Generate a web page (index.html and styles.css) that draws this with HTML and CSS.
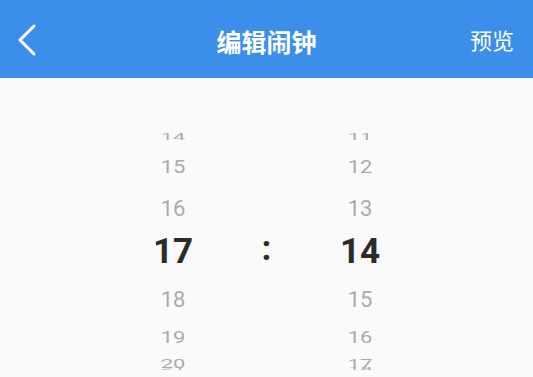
FILE: index.html
```html
<!DOCTYPE html>
<html lang="zh">
<head>
<meta charset="utf-8">
<title>编辑闹钟</title>
<link rel="stylesheet" href="styles.css">
</head>
<body>
<header class="bar">
  <div class="bar-side bar-left">
    <svg class="back" width="24" height="34" viewBox="0 0 24 34" aria-hidden="true">
      <path d="M17 3 L3 17 L17 31" fill="none" stroke="#fff" stroke-width="3" stroke-linecap="round" stroke-linejoin="round"/>
    </svg>
  </div>
  <h1 class="title">编辑闹钟</h1>
  <div class="bar-side bar-right"><span class="preview">预览</span></div>
</header>
<main class="picker">
  <div class="wheel">
    <div class="row r1"><span>14</span></div>
    <div class="row r2"><span>15</span></div>
    <div class="row r3"><span>16</span></div>
    <div class="row r4 sel"><span>17</span></div>
    <div class="row r5"><span>18</span></div>
    <div class="row r6"><span>19</span></div>
    <div class="row r7"><span>20</span></div>
    <div class="row r8"><span>21</span></div>
  </div>
  <div class="sep"><span>:</span></div>
  <div class="wheel">
    <div class="row r1"><span>11</span></div>
    <div class="row r2"><span>12</span></div>
    <div class="row r3"><span>13</span></div>
    <div class="row r4 sel"><span>14</span></div>
    <div class="row r5"><span>15</span></div>
    <div class="row r6"><span>16</span></div>
    <div class="row r7"><span>17</span></div>
    <div class="row r8"><span>18</span></div>
  </div>
</main>
</body>
</html>
```

FILE: styles.css
```css
html, body {
  margin: 0;
  padding: 0;
  background: #fafafa;
  font-family: Roboto, "Noto Sans", "Noto Sans CJK SC", sans-serif;
}

.bar {
  height: 78px;
  background: #3b8eea;
  display: flex;
  align-items: center;
  color: #fff;
}

.bar-side {
  width: 80px;
  display: flex;
  align-items: center;
}

.bar-left {
  padding-left: 17px;
  box-sizing: border-box;
}

.back {
  display: block;
  margin-top: 1px;
}

.bar-right {
  justify-content: flex-end;
  padding-right: 19px;
  box-sizing: border-box;
}

.title {
  flex: 1;
  margin: 0;
  text-align: center;
  font-family: "Noto Sans CJK SC", sans-serif;
  font-size: 25px;
  font-weight: 700;
  line-height: 1;
  padding-top: 4px;
}

.preview {
  font-family: "Noto Sans CJK SC", sans-serif;
  font-size: 22px;
  line-height: 1;
}

.picker {
  display: flex;
  justify-content: center;
  padding-top: 52px;
}

.wheel {
  width: 100px;
  height: 242px;
  overflow: hidden;
  display: flex;
  flex-direction: column;
}

.row {
  display: flex;
  align-items: center;
  justify-content: center;
  flex: none;
}

.row span {
  display: block;
  font-size: 22px;
  line-height: 1;
  color: #ababab;
}

.r1 { height: 21px; }
.r1 span { line-height: 18px; transform: translateY(-3.5px) scaleY(0.4); }
.r2 { height: 37px; }
.r2 span { transform: translateY(-3px) scaleY(0.87); }
.r3 { height: 41px; }
.r3 span { transform: translateY(0) scaleY(1); }
.r4 { height: 46px; }
.r4 span {
  font-size: 35px;
  font-weight: 700;
  color: #2b2b2b;
  transform: translateY(-1.5px);
}
.r5 { height: 44px; }
.r5 span { transform: translateY(3px); }
.r6 { height: 32px; }
.r6 span { transform: translateY(3px) scaleY(0.77); }
.r7 { height: 15px; }
.r7 span { line-height: 16px; transform: translateY(4.5px) scaleY(0.58); }
.r8 { height: 6px; }
.r8 span { line-height: 16px; transform: scaleY(0.12); }

.sep {
  width: 87px;
  display: flex;
  justify-content: center;
  padding-top: 99px;
  height: 46px;
}

.sep span {
  display: block;
  font-size: 35px;
  font-weight: 700;
  line-height: 46px;
  color: #2b2b2b;
  transform: translateY(-3px);
}
```
